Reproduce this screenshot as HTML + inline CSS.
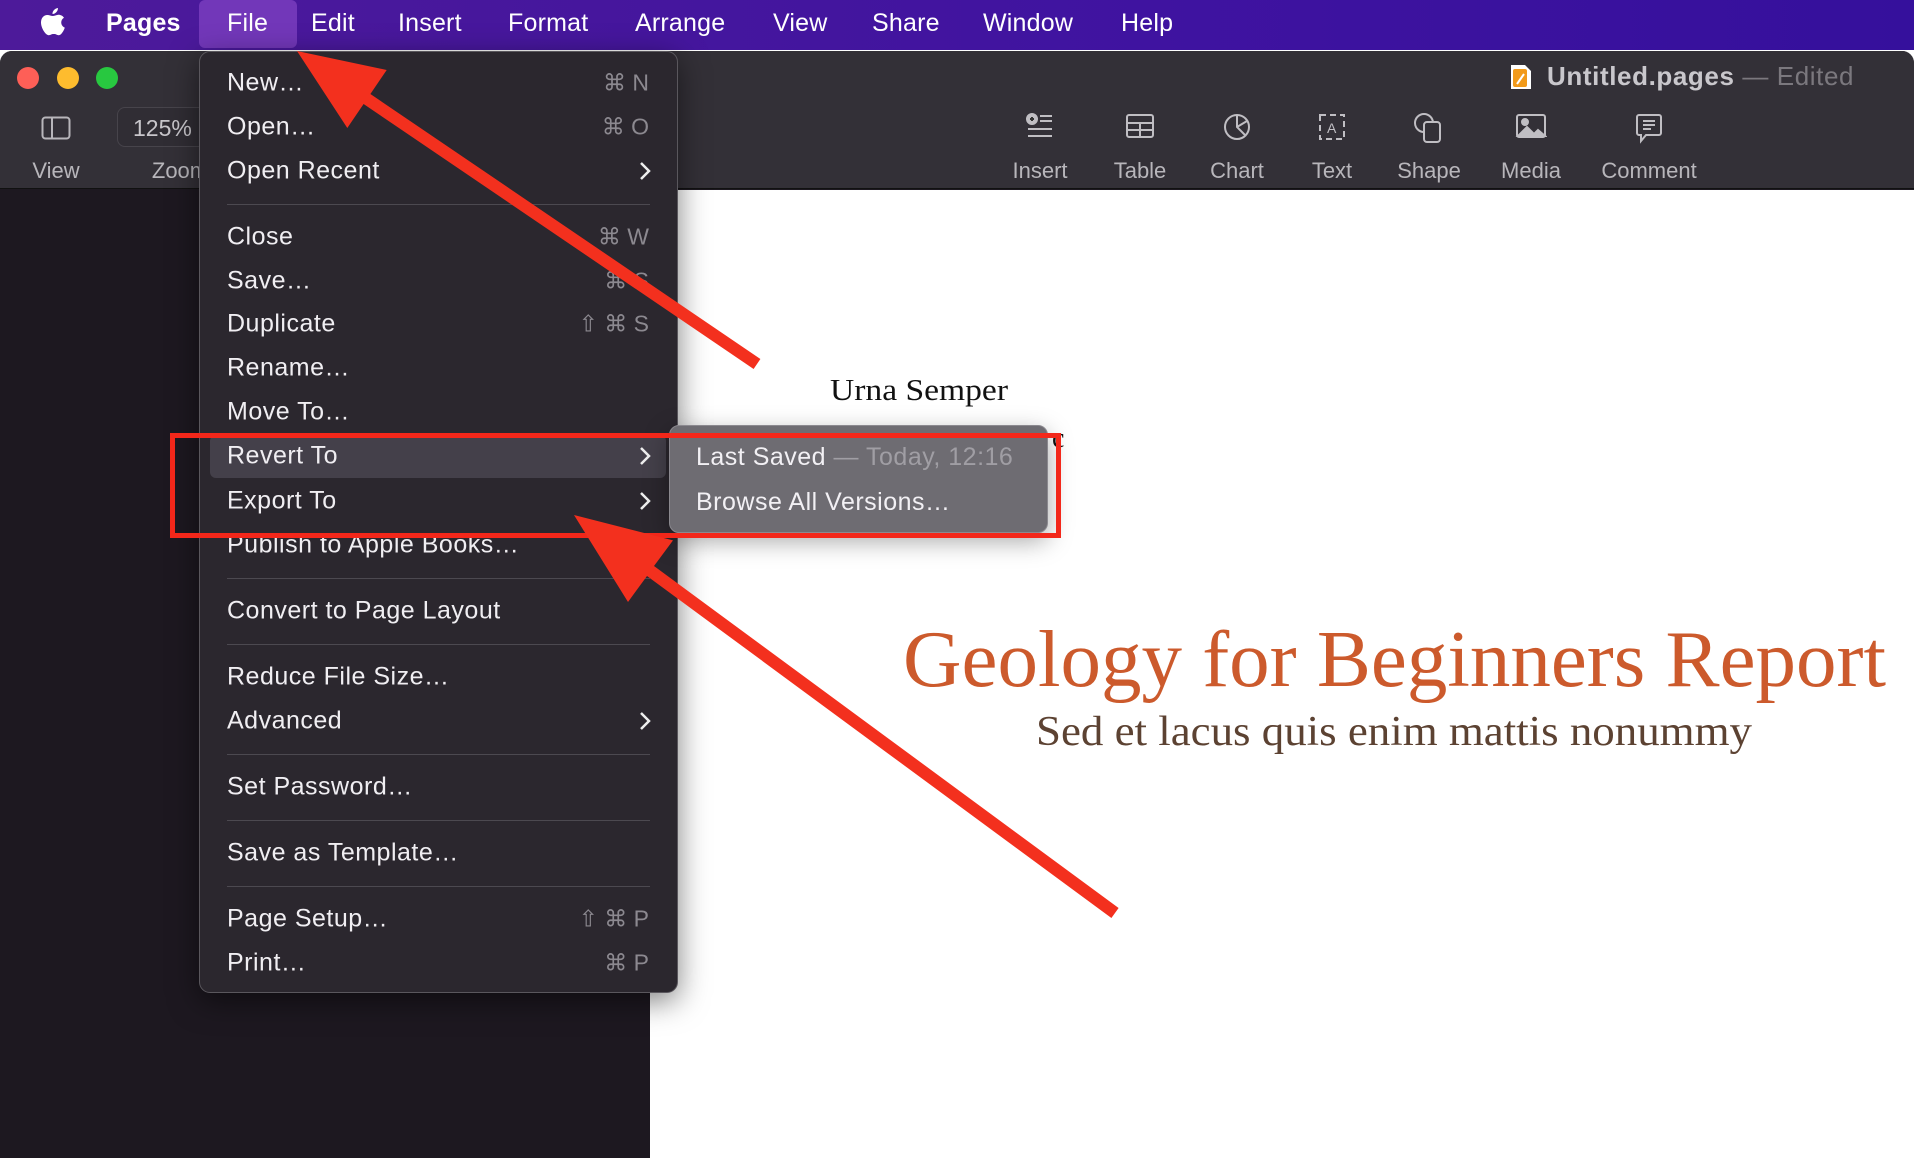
<!DOCTYPE html>
<html><head><meta charset="utf-8"><style>
*{margin:0;padding:0;box-sizing:border-box}
body{width:1914px;height:1158px;overflow:hidden;position:relative;background:#fff;font-family:"Liberation Sans",sans-serif}
.a{position:absolute;white-space:nowrap}
#mb{left:0;top:0;width:1914px;height:50px;background:linear-gradient(90deg,#4d1a9a,#3f13a0 60%,#35109c)}
.mi{position:absolute;top:9px;font-size:25px;color:#fff;letter-spacing:0.2px}
#win{left:0;top:51px;width:1914px;height:1107px;background:#1d1820;border-radius:12px 12px 0 0}
#tb{left:0;top:51px;width:1914px;height:138px;background:#333037;border-radius:12px 12px 0 0;border-bottom:1px solid #111}
.tl{position:absolute;width:22px;height:22px;border-radius:50%;top:67px}
.lab{position:absolute;top:158px;font-size:22px;color:#b8b6bb;transform:translateX(-50%)}
.ic{position:absolute;top:112px;transform:translateX(-50%)}
#doc{left:650px;top:190px;width:1264px;height:968px;background:#fff}
#menu{left:199px;top:51px;width:479px;height:942px;background:#2b272e;border:1px solid #5a575d;border-radius:11px;box-shadow:0 8px 30px rgba(0,0,0,.5)}
.it{position:absolute;left:27px;font-size:25px;letter-spacing:0.5px;color:#f0eef2;transform:translateY(-50%)}
.sc{position:absolute;right:28px;font-size:23px;color:#8c8990;transform:translateY(-50%)}
.sep{position:absolute;left:27px;width:423px;height:1px;background:#4c4950}
.chev{position:absolute;right:26px;transform:translateY(-50%)}
#sub{left:669px;top:425px;width:379px;height:108px;background:#6e6c72;border:1px solid #8b898f;border-radius:10px;box-shadow:0 8px 25px rgba(0,0,0,.35)}
</style></head><body>
<div class="a" id="mb">
<svg class="a" style="left:40px;top:8px" width="26" height="32" viewBox="0 0 26 32"><path d="M18 0c0 3-2.5 6-5.5 6C12.3 3 15 0.3 18 0zM13 8c2 0 3.5-1.2 5.5-1.2 1.5 0 4 .7 5.5 3-4 2.3-3.5 8.2.8 9.8-1 3-3.5 7.6-6 7.6-2 0-2.3-1.2-5-1.2s-3.2 1.2-5 1.2C5.5 27.2 1 20 1 14.5 1 9.8 4 7 7.3 7c2 0 3.7 1 5.7 1z" fill="#fff"/></svg>
<div class="mi" style="left:106px;font-weight:bold">Pages</div>
<div class="a" style="left:199px;top:0;width:98px;height:48px;background:#7237b9;border-radius:6px"></div>
<div class="mi" style="left:227px">File</div>
<div class="mi" style="left:311px">Edit</div>
<div class="mi" style="left:398px">Insert</div>
<div class="mi" style="left:508px">Format</div>
<div class="mi" style="left:635px">Arrange</div>
<div class="mi" style="left:773px">View</div>
<div class="mi" style="left:872px">Share</div>
<div class="mi" style="left:983px">Window</div>
<div class="mi" style="left:1121px">Help</div>
</div>
<div class="a" id="win"></div>
<div class="a" id="tb"></div>
<div class="tl" style="left:17px;background:#fe5f57"></div>
<div class="tl" style="left:57px;background:#febc2e"></div>
<div class="tl" style="left:96px;background:#28c840"></div>
<svg class="a" style="left:41px;top:116px" width="30" height="24"><rect x="1.5" y="1.5" width="27" height="21" rx="3" fill="none" stroke="#b8b6bb" stroke-width="2"/><line x1="11" y1="2" x2="11" y2="22" stroke="#b8b6bb" stroke-width="2"/></svg>
<div class="lab" style="left:56px">View</div>
<div class="a" style="left:117px;top:107px;width:90px;height:40px;border:1px solid #47444b;border-radius:8px;background:#302d34"></div>
<div class="a" style="left:133px;top:115px;font-size:23px;color:#c8c6cb">125%</div>
<div class="lab" style="left:180px">Zoom</div>
<svg class="a" style="left:1509px;top:63px" width="24" height="28"><path d="M2 2h14l6 6v18H2z" fill="#fff"/><rect x="4" y="6" width="14" height="18" rx="2" fill="#f29a1a"/><path d="M8 21l7-10" stroke="#fff" stroke-width="2"/></svg>
<div class="a" style="left:1547px;top:61px;font-size:26px;letter-spacing:0.6px;color:#c9c7cc;font-weight:bold">Untitled.pages <span style="font-weight:normal;color:#7b787e">— Edited</span></div>
<svg class="ic" style="left:1040px" width="30" height="30" viewBox="0 0 30 30" fill="none" stroke="#c0bec3" stroke-width="2"><circle cx="7" cy="7" r="5" fill="#c0bec3"/><path d="M5 7h4M7 5v4" stroke="#333"/><path d="M15 4h12M15 9h12M3 17h24M3 24h24"/></svg>
<svg class="ic" style="left:1140px" width="30" height="28" fill="none" stroke="#c0bec3" stroke-width="2"><rect x="2" y="3" width="26" height="22" rx="2"/><path d="M2 11h26M2 18h26M15 11v14"/></svg>
<svg class="ic" style="left:1237px" width="30" height="30" fill="none" stroke="#c0bec3" stroke-width="2"><circle cx="15" cy="15" r="12"/><path d="M15 3v12l8 8M15 15l10-6"/></svg>
<svg class="ic" style="left:1332px" width="30" height="30" fill="none" stroke="#c0bec3" stroke-width="2"><path d="M3 3h24v24H3z" stroke-dasharray="6 4"/><text x="10" y="21" font-size="14" fill="#c0bec3" stroke="none" font-family="Liberation Sans">A</text></svg>
<svg class="ic" style="left:1429px" width="32" height="32" fill="none" stroke="#c0bec3" stroke-width="2"><circle cx="11" cy="11" r="9"/><rect x="11" y="10" width="16" height="20" rx="3" fill="#333037"/></svg>
<svg class="ic" style="left:1531px" width="32" height="28" fill="none" stroke="#c0bec3" stroke-width="2"><rect x="2" y="3" width="28" height="22" rx="2"/><path d="M3 24l9-9 7 7 4-4 7 6z" fill="#c0bec3"/><circle cx="10" cy="10" r="3" fill="#c0bec3"/></svg>
<svg class="ic" style="left:1649px" width="30" height="32" fill="none" stroke="#c0bec3" stroke-width="2"><path d="M5 3h20a2 2 0 0 1 2 2v16a2 2 0 0 1-2 2H12l-5 6v-6H5a2 2 0 0 1-2-2V5a2 2 0 0 1 2-2zM9 9h12M9 13h12M9 17h8"/></svg>
<div class="lab" style="left:1040px">Insert</div>
<div class="lab" style="left:1140px">Table</div>
<div class="lab" style="left:1237px">Chart</div>
<div class="lab" style="left:1332px">Text</div>
<div class="lab" style="left:1429px">Shape</div>
<div class="lab" style="left:1531px">Media</div>
<div class="lab" style="left:1649px">Comment</div>
<div class="a" id="doc"></div>
<svg class="a" style="left:0;top:0" width="1914" height="1158">
<text x="919" y="400" text-anchor="middle" font-family="Liberation Serif,serif" font-size="31" fill="#111" textLength="178" lengthAdjust="spacingAndGlyphs">Urna Semper</text>
<text x="1052" y="447" font-family="Liberation Serif,serif" font-size="28" fill="#111">c</text>
<text x="903" y="686" font-family="Liberation Serif,serif" font-size="80" fill="#cc5a2c" textLength="983" lengthAdjust="spacingAndGlyphs">Geology for Beginners Report</text>
<text x="1036" y="745" font-family="Liberation Serif,serif" font-size="42" fill="#5c4232" textLength="716" lengthAdjust="spacingAndGlyphs">Sed et lacus quis enim mattis nonummy</text>
</svg>
<div class="a" id="menu">
<div class="it" style="top:31px">New…</div><div class="sc" style="top:31px">⌘ N</div>
<div class="it" style="top:75px">Open…</div><div class="sc" style="top:75px">⌘ O</div>
<div class="it" style="top:119px">Open Recent</div>
<div class="sep" style="top:152px"></div>
<div class="it" style="top:185px">Close</div><div class="sc" style="top:185px">⌘ W</div>
<div class="it" style="top:229px">Save…</div><div class="sc" style="top:229px">⌘ S</div>
<div class="it" style="top:272px">Duplicate</div><div class="sc" style="top:272px">⇧ ⌘ S</div>
<div class="it" style="top:316px">Rename…</div>
<div class="it" style="top:360px">Move To…</div>
<div class="a" style="left:10px;top:383px;width:456px;height:43px;background:#44404a;border-radius:6px"></div>
<div class="it" style="top:404px">Revert To</div>
<div class="it" style="top:449px">Export To</div>
<div class="it" style="top:493px">Publish to Apple Books…</div>
<div class="sep" style="top:526px"></div>
<div class="it" style="top:559px">Convert to Page Layout</div>
<div class="sep" style="top:592px"></div>
<div class="it" style="top:625px">Reduce File Size…</div>
<div class="it" style="top:669px">Advanced</div>
<div class="sep" style="top:702px"></div>
<div class="it" style="top:735px">Set Password…</div>
<div class="sep" style="top:768px"></div>
<div class="it" style="top:801px">Save as Template…</div>
<div class="sep" style="top:834px"></div>
<div class="it" style="top:867px">Page Setup…</div><div class="sc" style="top:867px">⇧ ⌘ P</div>
<div class="it" style="top:911px">Print…</div><div class="sc" style="top:911px">⌘ P</div>
<svg class="chev" style="top:119px" width="12" height="20"><path d="M2 2l8 8-8 8" fill="none" stroke="#eee" stroke-width="2.5"/></svg>
<svg class="chev" style="top:404px" width="12" height="20"><path d="M2 2l8 8-8 8" fill="none" stroke="#eee" stroke-width="2.5"/></svg>
<svg class="chev" style="top:449px" width="12" height="20"><path d="M2 2l8 8-8 8" fill="none" stroke="#eee" stroke-width="2.5"/></svg>
<svg class="chev" style="top:669px" width="12" height="20"><path d="M2 2l8 8-8 8" fill="none" stroke="#eee" stroke-width="2.5"/></svg>
</div>
<div class="a" id="sub">
<div class="a" style="left:26px;top:17px;font-size:25px;letter-spacing:0.5px;color:#f2f0f4">Last Saved <span style="color:#a09ea4">— Today, 12:16</span></div>
<div class="a" style="left:26px;top:62px;font-size:25px;letter-spacing:0.5px;color:#f2f0f4">Browse All Versions…</div>
</div>
<svg class="a" style="left:0;top:0" width="1914" height="1158">
<rect x="172.5" y="435.5" width="886" height="100" fill="none" stroke="#f3271a" stroke-width="5"/>
<polygon points="297,51 386.7,70 370.4,94 760.4,359 753.6,369 363.6,104 347.3,128" fill="#f3301e"/>
<polygon points="574,515 673,540.4 654,566 1118.6,908 1111.4,918 647,576 628,602" fill="#f3301e"/>
</svg>
</body></html>
